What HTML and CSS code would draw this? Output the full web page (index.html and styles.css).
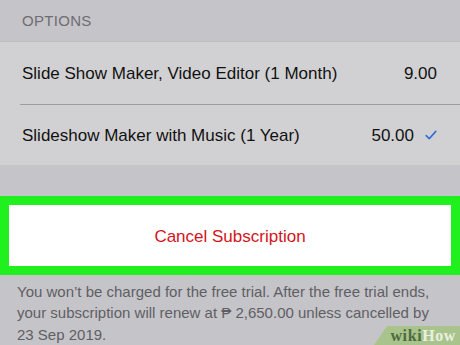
FILE: index.html
```html
<!DOCTYPE html>
<html>
<head>
<meta charset="utf-8">
<link rel="stylesheet" href="styles.css">
</head>
<body>
<div class="screen">
  <div class="section-header">OPTIONS</div>
  <div class="list">
    <div class="row row-first">
      <span class="label">Slide Show Maker, Video Editor (1 Month)</span>
      <span class="price">9.00</span>
    </div>
    <div class="row">
      <span class="label">Slideshow Maker with Music (1 Year)</span>
      <span class="price">50.00</span>
      <span class="check">
        <svg width="12" height="10" viewBox="0 0 12 10"><path d="M1.2 5.6 L4.3 8.6 L10.8 1.4" fill="none" stroke="#2f6fd8" stroke-width="1.6" stroke-linecap="round" stroke-linejoin="round"/></svg>
      </span>
    </div>
  </div>
  <div class="spacer"></div>
  <div class="highlight">
    <div class="cancel">Cancel Subscription</div>
  </div>
  <p class="note"><span class="note-text">You won’t be charged for the free trial. After the free trial ends, your subscription will renew at ₱ 2,650.00 unless cancelled by 23 Sep 2019.</span></p>
  <div class="wikihow"><span class="wiki">wiki</span><span class="how">How</span></div>
</div>
</body>
</html>
```
FILE: styles.css
```css
html, body {
  margin: 0;
  padding: 0;
}
body {
  width: 460px;
  height: 345px;
  overflow: hidden;
  background: #c5c4c9;
  font-family: "Liberation Sans", Arial, sans-serif;
}
.screen {
  position: relative;
  width: 460px;
  height: 345px;
  display: flex;
  flex-direction: column;
}
.section-header {
  height: 42px;
  box-sizing: border-box;
  padding: 12px 0 0 22px;
  font-size: 15px;
  color: #6e6d72;
  letter-spacing: 0.3px;
  border-bottom: 1px solid #bdbcc0;
}
.list {
  background: #d1d1d3;
}
.row {
  display: flex;
  align-items: center;
  box-sizing: border-box;
  height: 60px;
  margin-left: 20px;
  padding: 3px 23px 0 2px;
  font-size: 17px;
  color: #111;
}
.row-first {
  height: 62px;
  padding-top: 2px;
}
.row + .row {
  border-top: 1px solid #9e9ea2;
  height: 61px;
}
.label {
  flex: 1;
}
.check {
  display: flex;
  margin-left: 11px;
  margin-top: -2px;
}
.spacer {
  height: 31px;
  background: #c5c4c9;
}
.highlight {
  background: #1ff01e;
  padding: 9px;
}
.cancel {
  background: #ffffff;
  height: 61px;
  box-sizing: border-box;
  padding-top: 3px;
  display: flex;
  align-items: center;
  justify-content: center;
  color: #d3141c;
  font-size: 17px;
}
.note {
  margin: 6px 0 0 17px;
  padding-right: 20px;
  font-size: 15px;
  line-height: 21.5px;
  color: #5f5f63;
}
.wikihow {
  position: absolute;
  right: 0;
  bottom: 0;
  width: 86px;
  height: 19px;
  background: #a9c38c;
  clip-path: polygon(13px 0, 100% 0, 100% 100%, 0 100%);
  font-family: "Liberation Serif", "DejaVu Serif", serif;
  font-weight: bold;
  font-size: 16px;
  line-height: 19px;
  letter-spacing: 0.6px;
  text-align: right;
  padding-right: 4px;
  box-sizing: border-box;
}
.wiki {
  color: #4d6b3c;
}
.how {
  color: #eaf0e0;
}
```
